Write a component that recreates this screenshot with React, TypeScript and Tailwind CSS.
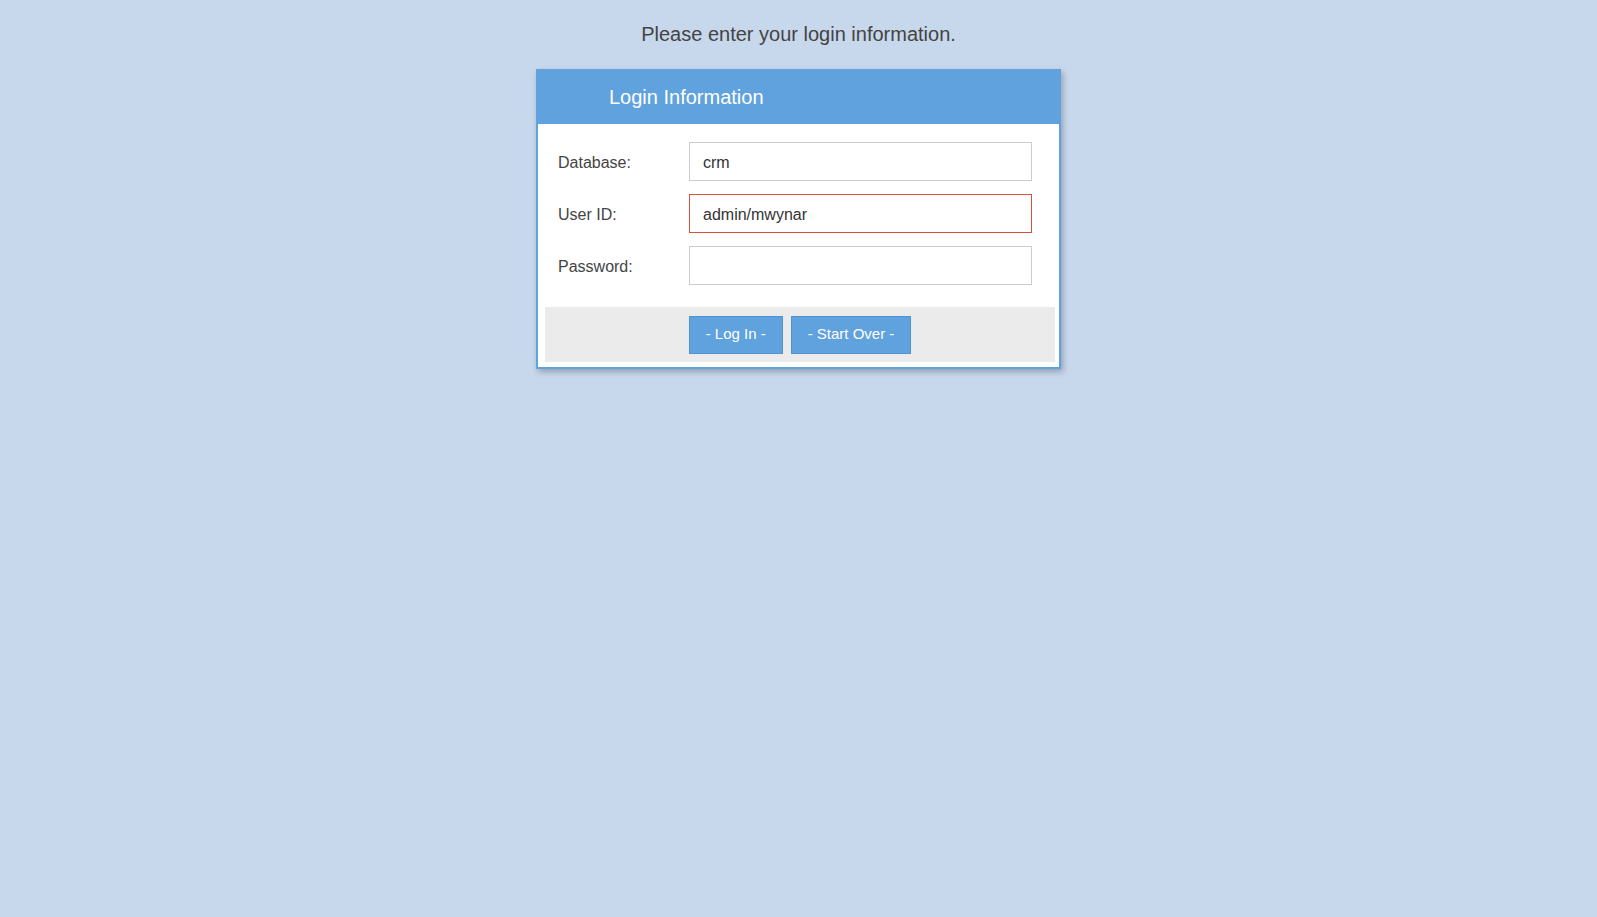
import { useState } from "react";

export default function App() {
  const [db, setDb] = useState("crm");
  const [user, setUser] = useState("admin/mwynar");
  const [pw, setPw] = useState("");

  const rows = [
    { label: "Database:", value: db, set: setDb, type: "text", err: false },
    { label: "User ID:", value: user, set: setUser, type: "text", err: true },
    { label: "Password:", value: pw, set: setPw, type: "password", err: false },
  ];

  return (
    <div className="min-h-screen w-full bg-[#c7d7ec] font-['Liberation_Sans',Arial,sans-serif] text-[#444]">
      {/* Prompt */}
      <p className="pt-[23px] text-center text-[20px] leading-[22px] text-[#444]">
        Please enter your login information.
      </p>

      {/* Login card */}
      <div className="mx-auto mt-[24px] w-[525px] border-2 border-[#5fa2dd] bg-white shadow-[2px_3px_6px_rgba(0,0,0,0.25)]">
        <div className="flex h-[53px] items-center bg-[#5fa2dd] pl-[71px] text-[20px] leading-[23px] text-white">
          Login Information
        </div>

        <div className="grid grid-cols-[131px_343px] gap-y-[13px] pl-[20px] pt-[18px]">
          {rows.map((r) => (
            <div key={r.label} className="contents">
              <label className="flex items-center pt-[2px] text-[16px] text-[#444]">{r.label}</label>
              <input
                type={r.type}
                value={r.value}
                onChange={(e) => r.set(e.target.value)}
                className={`h-[39px] w-full border bg-white px-[13px] pt-[2px] text-[16px] text-[#333] outline-none ${
                  r.err ? "border-[#d9503a]" : "border-[#ccc]"
                }`}
              />
            </div>
          ))}
        </div>

        {/* Buttons */}
        <div className="ml-[7px] mt-[22px] mb-[5px] flex h-[55px] w-[510px] items-center justify-center gap-[8px] bg-[#ebebeb]">
          <button className="h-[38px] border border-[#4f93d2] bg-[#5fa2dd] px-[16px] text-[15px] text-white">
            - Log In -
          </button>
          <button className="h-[38px] border border-[#4f93d2] bg-[#5fa2dd] px-[16px] text-[15px] text-white">
            - Start Over -
          </button>
        </div>
      </div>
    </div>
  );
}
